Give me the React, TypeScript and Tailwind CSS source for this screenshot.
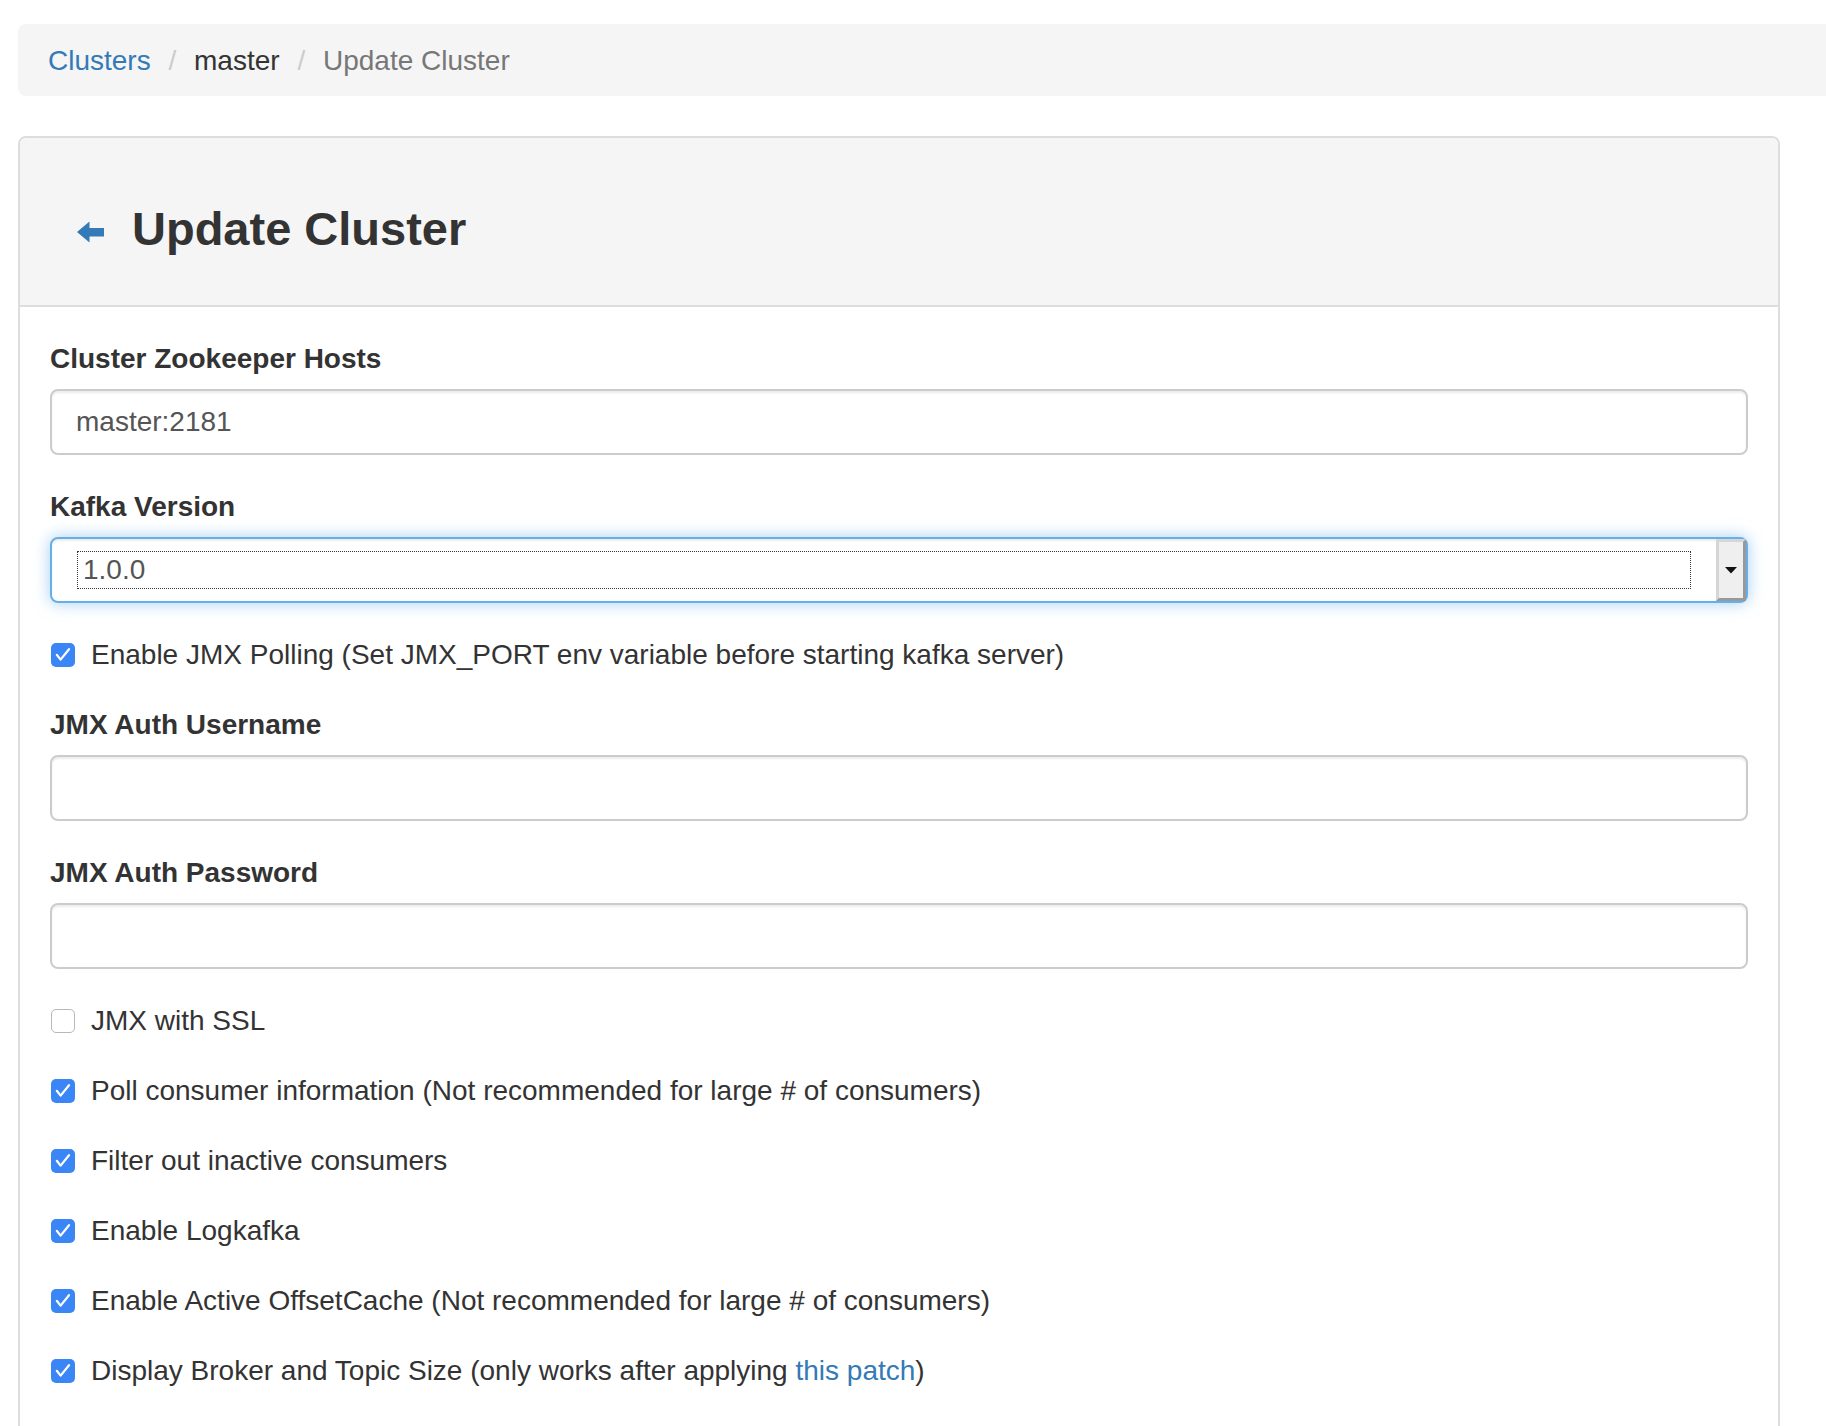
import React from "react";

function Check({ checked }: { checked: boolean }) {
  if (checked) {
    return (
      <span className="flex h-[24px] w-[24px] shrink-0 items-center justify-center rounded-[5px] bg-[#3a86f6]">
        <svg width="24" height="24" viewBox="0 0 24 24">
          <path d="M5.8 11.8 L9.6 16.6 L18 6.2" fill="none" stroke="#ffffff" strokeWidth="2.2" strokeLinecap="round" strokeLinejoin="round" />
        </svg>
      </span>
    );
  }
  return <span className="block h-[24px] w-[24px] shrink-0 rounded-[5px] border-[1.5px] border-[#b8b8b8] bg-white" />;
}

function CheckRow({ checked, mt, children }: { checked: boolean; mt: string; children: React.ReactNode }) {
  return (
    <div className={`flex h-[40px] items-center ${mt}`}>
      <span className="ml-[1px]">
        <Check checked={checked} />
      </span>
      <span className="ml-[16px] text-[28px] leading-[40px] text-[#333]">{children}</span>
    </div>
  );
}

function Label({ children, mt }: { children: React.ReactNode; mt: string }) {
  return <div className={`text-[28px] font-bold leading-[40px] text-[#333] ${mt}`}>{children}</div>;
}

function TextInput({ value }: { value: string }) {
  return (
    <input
      readOnly
      value={value}
      className="mt-[10px] block h-[66px] w-full rounded-[8px] border-2 border-[#ccc] bg-white px-[24px] font-['Liberation_Sans',Arial,sans-serif] text-[28px] text-[#555] shadow-[inset_0_2px_2px_rgba(0,0,0,0.075)] outline-none"
    />
  );
}

export default function App() {
  return (
    <div className="h-[1426px] w-full overflow-hidden bg-white font-['Liberation_Sans',Arial,sans-serif] text-[#333]">
      <div className="pl-[18px]">
        {/* Breadcrumb */}
        <div className="mt-[24px] h-[72px] rounded-l-[8px] bg-[#f5f5f5] pl-[30px] pt-[17px] text-[28px] leading-[40px] whitespace-nowrap">
          <a className="text-[#337ab7]">Clusters</a>{" "}
          <span className="px-[10px] text-[#ccc]">/{"\u00a0"}</span>
          <span className="text-[#333]">master</span>{" "}
          <span className="px-[10px] text-[#ccc]">/{"\u00a0"}</span>
          <span className="text-[#777]">Update Cluster</span>
        </div>

        {/* Panel */}
        <div className="mt-[40px] w-[1762px] rounded-[8px] border-2 border-[#ddd] pb-[200px]">
          <div className="h-[169px] rounded-t-[6px] border-b-2 border-[#ddd] bg-[#f5f5f5] pl-[57px] pt-[65px]">
            <div className="flex h-[52px] items-center">
              <svg className="mt-[6px] shrink-0" width="27" height="22" viewBox="0 0 27 22">
                <path d="M0 11 L12.5 0.5 L12.5 7 L27 7 L27 15.5 L12.5 15.5 L12.5 21.5 Z" fill="#337ab7" />
              </svg>
              <h3 className="ml-[28px] text-[47px] font-bold leading-[52px] text-[#333]">Update Cluster</h3>
            </div>
          </div>

          <div className="px-[30px] pt-[32px]">
            <Label mt="mt-0">Cluster Zookeeper Hosts</Label>
            <TextInput value="master:2181" />

            <Label mt="mt-[32px]">Kafka Version</Label>
            <div className="mt-[10px] flex h-[66px] items-center rounded-[8px] border-2 border-[#66afe9] bg-white pl-[25px] shadow-[inset_0_2px_2px_rgba(0,0,0,0.075),0_0_16px_rgba(102,175,233,0.6)]">
              <div className="flex h-[38px] flex-1 items-center border border-dotted border-[#333] pl-[5px] text-[28px] text-[#555]">
                1.0.0
              </div>
              <div className="ml-[25px] flex w-[30px] items-center justify-center self-stretch border-t-[3px] border-l-[3px] border-r-[3px] border-b-[3px] border-t-[#d6d6d6] border-l-[#d6d6d6] border-r-[#999] border-b-[#999] bg-[#efefef]">
                <svg width="12" height="7" viewBox="0 0 12 7">
                  <path d="M0 0 L12 0 L6 6.5 Z" fill="#111" />
                </svg>
              </div>
            </div>

            <CheckRow checked mt="mt-[32px]">
              Enable JMX Polling (Set JMX_PORT env variable before starting kafka server)
            </CheckRow>

            <Label mt="mt-[30px]">JMX Auth Username</Label>
            <TextInput value="" />

            <Label mt="mt-[32px]">JMX Auth Password</Label>
            <TextInput value="" />

            <CheckRow checked={false} mt="mt-[32px]">
              JMX with SSL
            </CheckRow>
            <CheckRow checked mt="mt-[30px]">
              Poll consumer information (Not recommended for large # of consumers)
            </CheckRow>
            <CheckRow checked mt="mt-[30px]">
              Filter out inactive consumers
            </CheckRow>
            <CheckRow checked mt="mt-[30px]">
              Enable Logkafka
            </CheckRow>
            <CheckRow checked mt="mt-[30px]">
              Enable Active OffsetCache (Not recommended for large # of consumers)
            </CheckRow>
            <CheckRow checked mt="mt-[30px]">
              Display Broker and Topic Size (only works after applying <a className="text-[#337ab7]">this patch</a>)
            </CheckRow>
          </div>
        </div>
      </div>
    </div>
  );
}
